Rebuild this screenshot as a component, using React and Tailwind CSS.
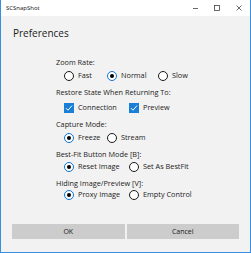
import React from "react";

const font = { fontFamily: '"Open Sans", "Noto Sans", sans-serif' };

function Radio({ checked, label, w }) {
  return (
    <div className={`flex items-center gap-[4px] ${w || ""}`}>
      <div
        className={`w-[10px] h-[10px] shrink-0 rounded-full border flex items-center justify-center bg-white ${
          checked ? "border-[#0a74d4]" : "border-[#1a1a1a]"
        }`}
      >
        {checked && <div className="w-[4px] h-[4px] rounded-full bg-black" />}
      </div>
      <span className="text-[7.3px] leading-[11px] text-[#1a1a1a] whitespace-nowrap">{label}</span>
    </div>
  );
}

function Check({ label, w }) {
  return (
    <div className={`flex items-center gap-[4px] ${w || ""}`}>
      <div className="w-[10px] h-[10px] shrink-0 bg-[#1a7fd6] flex items-center justify-center">
        <svg width="8" height="8" viewBox="0 0 8 8">
          <path d="M1 4.2 L3 6.2 L7 1.6" stroke="white" strokeWidth="1" fill="none" />
        </svg>
      </div>
      <span className="text-[7.3px] leading-[11px] text-[#1a1a1a] whitespace-nowrap">{label}</span>
    </div>
  );
}

function Group({ title, children, top, rowTop }) {
  return (
    <div className={`flex flex-col ${top}`}>
      <div className="text-[7.3px] leading-[11px] text-[#1a1a1a] whitespace-nowrap">{title}</div>
      <div className={`flex items-center pl-[8px] ${rowTop}`}>{children}</div>
    </div>
  );
}

export default function App() {
  return (
    <div
      className="w-[251px] h-[253px] border border-t-0 border-[#3a8ee0] bg-[#f2f2f2] flex flex-col overflow-hidden"
      style={font}
    >
      <div className="h-[16px] bg-white flex items-center pl-[5px] shrink-0">
        <span className="text-[6px] leading-[8px] text-[#111] flex-1">SCSnapShot</span>
        <div className="flex items-center">
          <svg width="22" height="16" viewBox="0 0 22 16">
            <path d="M9 8.5 H14" stroke="#444" strokeWidth="0.8" />
          </svg>
          <svg width="22" height="16" viewBox="0 0 22 16">
            <rect x="8.5" y="5.5" width="5" height="5" stroke="#444" strokeWidth="0.8" fill="none" />
          </svg>
          <svg width="22" height="16" viewBox="0 0 22 16">
            <path d="M8.5 5.5 L13.5 10.5 M13.5 5.5 L8.5 10.5" stroke="#444" strokeWidth="0.8" />
          </svg>
        </div>
      </div>
      <div className="flex-1 flex flex-col">
        <div className="pl-[12px] pt-[10px] text-[10px] leading-[14px] text-[#1a1a1a]">Preferences</div>
        <div className="pl-[55px] flex flex-col">
          <Group title="Zoom Rate:" top="mt-[17px]" rowTop="mt-[2px]">
            <Radio label="Fast" w="w-[43px]" />
            <Radio checked label="Normal" w="w-[51px]" />
            <Radio label="Slow" />
          </Group>
          <Group title="Restore State When Returning To:" top="mt-[6px]" rowTop="mt-[4px]">
            <Check label="Connection" w="w-[65px]" />
            <Check label="Preview" />
          </Group>
          <Group title="Capture Mode:" top="mt-[6px]" rowTop="mt-[2px]">
            <Radio checked label="Freeze" w="w-[43px]" />
            <Radio label="Stream" />
          </Group>
          <Group title="Best-Fit Button Mode [B]:" top="mt-[6px]" rowTop="mt-[1px]">
            <Radio checked label="Reset Image" w="w-[65px]" />
            <Radio label="Set As BestFit" />
          </Group>
          <Group title="Hiding Image/Preview [V]:" top="mt-[6px]" rowTop="mt-[0px]">
            <Radio checked label="Proxy Image" w="w-[65px]" />
            <Radio label="Empty Control" />
          </Group>
        </div>
        <div className="mt-auto mb-[13px] px-[11px] flex gap-[2px]">
          <button className="flex-1 h-[15px] bg-[#cccccc] text-[7px] leading-[15px] text-[#1a1a1a]">OK</button>
          <button className="flex-1 h-[15px] bg-[#cccccc] text-[7px] leading-[15px] text-[#1a1a1a]">Cancel</button>
        </div>
      </div>
    </div>
  );
}
